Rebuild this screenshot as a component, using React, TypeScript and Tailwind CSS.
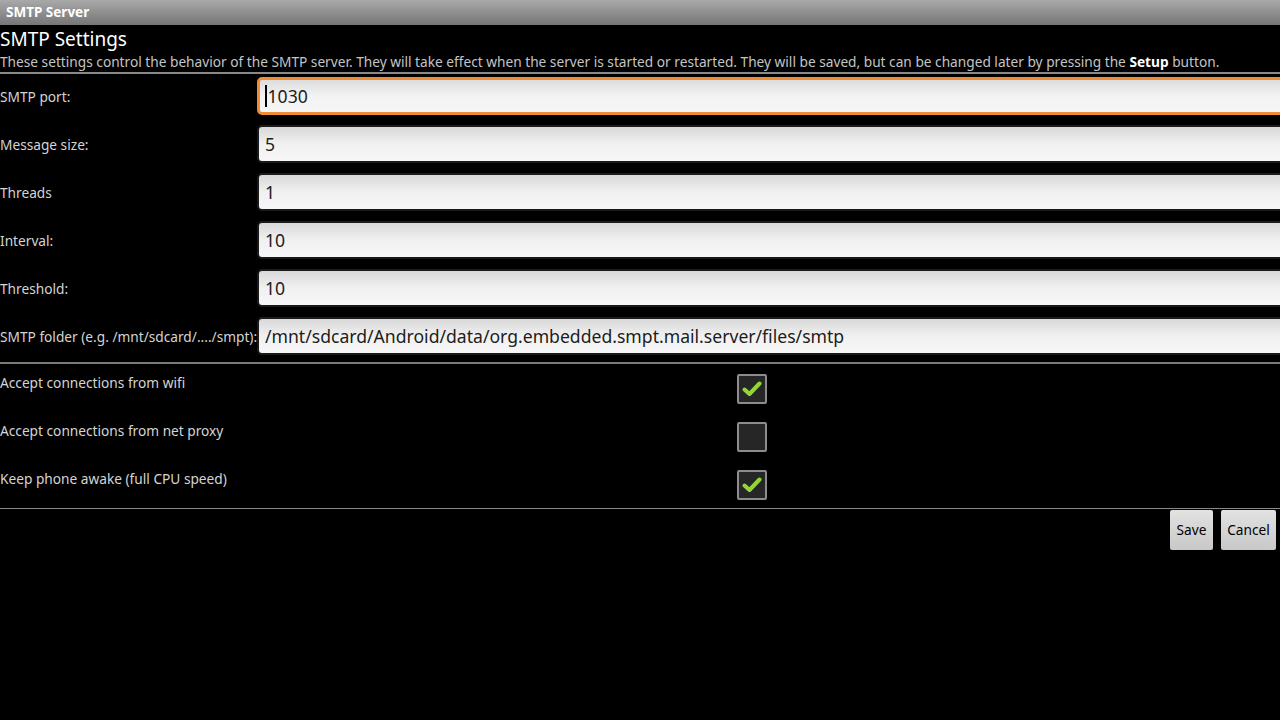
import { FC } from "react";

const fields = [
  { label: "SMTP port:", value: "1030", focused: true },
  { label: "Message size:", value: "5" },
  { label: "Threads", value: "1" },
  { label: "Interval:", value: "10" },
  { label: "Threshold:", value: "10" },
  {
    label: "SMTP folder (e.g. /mnt/sdcard/..../smpt):",
    value: "/mnt/sdcard/Android/data/org.embedded.smpt.mail.server/files/smtp",
  },
];

const options = [
  { label: "Accept connections from wifi", checked: true },
  { label: "Accept connections from net proxy", checked: false },
  { label: "Keep phone awake (full CPU speed)", checked: true },
];

const CheckBox: FC<{ checked: boolean }> = ({ checked }) => (
  <div className="w-[30px] h-[30px] border-2 border-[#8c8c8c] bg-[#262626] rounded-[2px] flex items-center justify-center shadow-[0_0_2px_#000]">
    {checked && (
      <svg width="20" height="18" viewBox="0 0 20 18">
        <path
          d="M2.5 9.5 L7.5 14 L17.5 3.5"
          fill="none"
          stroke="#93d638"
          strokeWidth="4"
          strokeLinecap="round"
          strokeLinejoin="round"
        />
      </svg>
    )}
  </div>
);

const App: FC = () => {
  return (
    <div
      className="w-[1280px] h-[720px] overflow-hidden bg-black text-[#d0d0d0]"
      style={{ fontFamily: '"Noto Sans", "Open Sans", sans-serif' }}
    >
      {/* title bar */}
      <div className="h-[25px] bg-gradient-to-b from-[#a9a9a9] to-[#767676] flex items-center pl-[6px]">
        <span className="text-[13.5px] font-bold text-white leading-none">SMTP Server</span>
      </div>

      <div className="pt-[1px]">
        <h1 className="text-[19px] leading-[26px] text-white">SMTP Settings</h1>
        <p className="mt-[1px] text-[13.7px] leading-[18px] text-[#c4c4c4] whitespace-nowrap">
          These settings control the behavior of the SMTP server. They will take effect when the
          server is started or restarted. They will be saved, but can be changed later by pressing
          the <b className="text-white">Setup</b> button.
        </p>
        <div className="mt-[1px] h-[2px] bg-[#8a8a8a]" />
      </div>

      {/* text fields */}
      <div className="flex flex-col gap-[10px] pt-[3px]">
        {fields.map(({ label, value, focused }) => (
          <div key={label} className="h-[38px] flex items-center">
            <div className="w-[257px] shrink-0 pt-[2px] text-[13.7px] text-[#d4d4d4] whitespace-nowrap">
              {label}
            </div>
            <div
              className={
                focused
                  ? "w-[1040px] shrink-0 h-[38px] rounded-[5px] border-[3px] border-[#f08c34] bg-gradient-to-b from-[#dcdcdc] via-[#f3f3f3] to-[#f6f6f6] flex items-center pl-[5px]"
                  : "w-[1040px] shrink-0 h-[38px] rounded-[5px] border-[2px] border-[#1a1a1a] bg-gradient-to-b from-[#d8d8d8] via-[#f1f1f1] to-[#f6f6f6] flex items-center pl-[6px]"
              }
            >
              {focused && <span className="w-[1.5px] h-[22px] bg-black mr-[1px]" />}
              <span className="text-[17.6px] text-[#1c1c1c] whitespace-nowrap">{value}</span>
            </div>
          </div>
        ))}
      </div>

      <div className="mt-[7px] h-[2px] bg-[#7a7a7a]" />

      {/* check boxes */}
      <div className="flex flex-col">
        {options.map(({ label, checked }) => (
          <div key={label} className="h-[48px] flex">
            <div className="w-[737px] shrink-0 pt-[10px] text-[13.7px] leading-[18px] text-[#d4d4d4]">
              {label}
            </div>
            <div className="pt-[10px]">
              <CheckBox checked={checked} />
            </div>
          </div>
        ))}
      </div>

      <div className="h-px bg-[#8a8a8a]" />

      {/* buttons */}
      <div className="flex justify-end gap-[8px] pr-[4px] pt-[1px]">
        <button className="h-[40px] w-[43px] rounded-[2px] bg-gradient-to-b from-[#e2e2e2] to-[#c8c8c8] text-[13.7px] text-black">
          Save
        </button>
        <button className="h-[40px] w-[55px] rounded-[2px] bg-gradient-to-b from-[#e2e2e2] to-[#c8c8c8] text-[13.7px] text-black">
          Cancel
        </button>
      </div>
    </div>
  );
};

export default App;
